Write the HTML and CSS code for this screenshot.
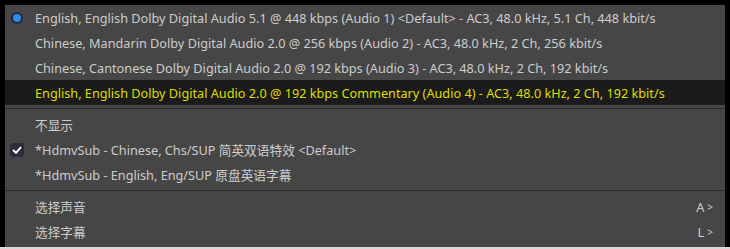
FILE: index.html
```html
<!DOCTYPE html>
<html>
<head>
<meta charset="utf-8">
<link rel="stylesheet" href="styles.css">
</head>
<body>
<div class="frame">
  <div class="menu">
    <div class="item">
      <span class="mark"><span class="radio"></span></span>
      <span class="label">English, English Dolby Digital Audio 5.1 @ 448 kbps (Audio 1) &lt;Default&gt; - AC3, 48.0 kHz, 5.1 Ch, 448 kbit/s</span>
    </div>
    <div class="item">
      <span class="mark"></span>
      <span class="label">Chinese, Mandarin Dolby Digital Audio 2.0 @ 256 kbps (Audio 2) - AC3, 48.0 kHz, 2 Ch, 256 kbit/s</span>
    </div>
    <div class="item">
      <span class="mark"></span>
      <span class="label">Chinese, Cantonese Dolby Digital Audio 2.0 @ 192 kbps (Audio 3) - AC3, 48.0 kHz, 2 Ch, 192 kbit/s</span>
    </div>
    <div class="item active">
      <span class="mark"></span>
      <span class="label">English, English Dolby Digital Audio 2.0 @ 192 kbps Commentary (Audio 4) - AC3, 48.0 kHz, 2 Ch, 192 kbit/s</span>
    </div>
    <div class="sep"></div>
    <div class="item">
      <span class="mark"></span>
      <span class="label">不显示</span>
    </div>
    <div class="item">
      <span class="mark"><span class="check"><svg width="10" height="8" viewBox="0 0 10 8"><path d="M1 4 L4 6.8 L9 1.2" fill="none" stroke="#fff" stroke-width="2"/></svg></span></span>
      <span class="label">*HdmvSub - Chinese, Chs/SUP 简英双语特效 &lt;Default&gt;</span>
    </div>
    <div class="item">
      <span class="mark"></span>
      <span class="label">*HdmvSub - English, Eng/SUP 原盘英语字幕</span>
    </div>
    <div class="sep"></div>
    <div class="item">
      <span class="mark"></span>
      <span class="label">选择声音</span>
      <span class="key">A<span class="arrow">&gt;</span></span>
    </div>
    <div class="item">
      <span class="mark"></span>
      <span class="label">选择字幕</span>
      <span class="key">L<span class="arrow">&gt;</span></span>
    </div>
  </div>
  <div class="edge"></div>
</div>
</body>
</html>
```

FILE: styles.css
```css
html, body {
  margin: 0;
  padding: 0;
  background: #000;
  width: 730px;
  height: 249px;
  overflow: hidden;
}
.frame {
  display: flex;
  flex-direction: column;
  height: 249px;
}
.menu {
  margin: 5px 5px 0 5px;
  width: 720px;
  height: 242px;
  background: #464646;
  font-family: "Noto Sans", "Noto Sans CJK SC", sans-serif;
  font-size: 12.7px;
  color: #cdcdcd;
  box-sizing: border-box;
}
.edge {
  height: 2px;
  background: #d8d8d8;
}
.item {
  display: flex;
  align-items: center;
  height: 25px;
  white-space: nowrap;
}
.item.active {
  background: #1b1b1b;
  color: #dede00;
}
.mark {
  width: 30px;
  flex: none;
  display: flex;
  justify-content: center;
  align-items: center;
}
.radio {
  width: 8px;
  height: 8px;
  border-radius: 50%;
  background: #2f8bf0;
  border: 2px solid #26263a;
  margin-left: -6px;
}
.check {
  width: 14px;
  height: 14px;
  border-radius: 3px;
  background: #2c2c3a;
  display: flex;
  align-items: center;
  justify-content: center;
  margin-left: -6px;
}
.label {
  flex: 1;
}
.key {
  margin-right: 12px;
  display: flex;
  align-items: center;
  gap: 3px;
}
.arrow {
  font-size: 10px;
}
.sep {
  height: 7px;
  display: flex;
  flex-direction: column;
  justify-content: center;
}
.sep::before {
  content: "";
  display: block;
  height: 1px;
  background: #2a2a2a;
}
```
